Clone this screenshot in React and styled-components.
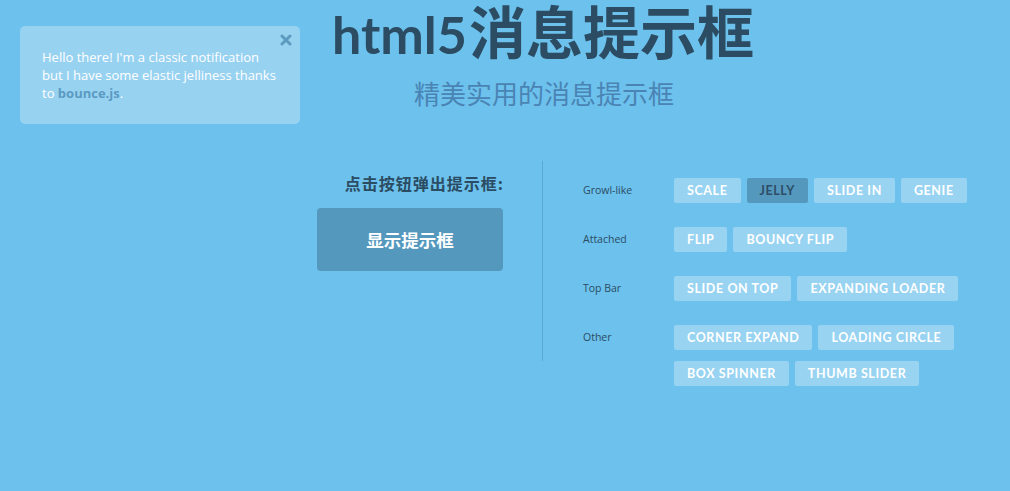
import styled, { createGlobalStyle } from "styled-components";

const groups = [
  { label: "Growl-like", items: ["Scale", "Jelly", "Slide in", "Genie"], active: "Jelly" },
  { label: "Attached", items: ["Flip", "Bouncy Flip"] },
  { label: "Top Bar", items: ["Slide on top", "Expanding loader"] },
  { label: "Other", items: ["Corner expand", "Loading circle", "Box spinner", "Thumb slider"] },
];

const App = () => {
  return (
    <>
      <GlobalStyle />
      <Page>
        <Notice>
          <CloseBtn aria-label="close">
            <svg width="12" height="12" viewBox="0 0 12 12">
              <path d="M2 2 L10 10 M10 2 L2 10" stroke="#5d9ac0" strokeWidth="3" strokeLinecap="round" />
            </svg>
          </CloseBtn>
          <p>
            Hello there! I'm a classic notification but I have some elastic jelliness thanks to{" "}
            <a href="#">bounce.js</a>.
          </p>
        </Notice>

        <Header>
          <h1>
            <Latin>html5</Latin>消息提示框
          </h1>
          <span>精美实用的消息提示框</span>
        </Header>

        <Main>
          <LeftCol>
            <Prompt>点击按钮弹出提示框:</Prompt>
            <ShowButton>显示提示框</ShowButton>
          </LeftCol>

          <RightCol>
            {groups.map((g) => (
              <Row key={g.label}>
                <RowLabel>{g.label}</RowLabel>
                <ButtonSet>
                  {g.items.map((item) => (
                    <StyleButton key={item} $active={item === g.active}>
                      {item}
                    </StyleButton>
                  ))}
                </ButtonSet>
              </Row>
            ))}
          </RightCol>
        </Main>
      </Page>
    </>
  );
};

export default App;

const GlobalStyle = createGlobalStyle`
  html, body {
    margin: 0;
    padding: 0;
    background: #6cc1ed;
  }

  body {
    font-family: "Open Sans", "Noto Sans CJK SC", sans-serif;
    color: #2b4c62;
  }
`;

const Page = styled.div`
  position: relative;
  width: 1010px;
  height: 491px;
  overflow: hidden;
  background: #6cc1ed;
`;

const Notice = styled.div`
  position: absolute;
  left: 20px;
  top: 26px;
  width: 280px;
  height: 98px;
  box-sizing: border-box;
  padding: 22px 20px 0 22px;
  background: #98d2f1;
  border-radius: 5px;

  p {
    margin: 0;
    font-family: "Open Sans", sans-serif;
    font-size: 13px;
    line-height: 18px;
    color: #ffffff;
  }

  a {
    color: #5a9ac2;
    font-weight: 700;
    text-decoration: none;
  }
`;

const CloseBtn = styled.span`
  position: absolute;
  top: 8px;
  right: 8px;
  display: flex;
  align-items: center;
  justify-content: center;
  width: 12px;
  height: 12px;
`;

const Header = styled.header`
  display: flex;
  flex-direction: column;
  align-items: center;
  padding-top: 0;

  h1 {
    margin: 0;
    font-family: "Noto Sans CJK SC", sans-serif;
    font-size: 57px;
    font-weight: 700;
    line-height: 58px;
    color: #2b4c62;
    padding-left: 76px;
  }

  span {
    margin-top: 13px;
    font-family: "Noto Sans CJK SC", sans-serif;
    font-size: 26px;
    line-height: 34px;
    color: #4a84b4;
    padding-left: 78px;
  }
`;

const Latin = styled.b`
  font-family: "Lato", sans-serif;
  font-size: 52px;
  font-weight: 700;
  margin-right: 2px;
`;

const Main = styled.section`
  display: grid;
  grid-template-columns: 543px 1fr;
  align-items: start;
  margin-top: 51px;
`;

const LeftCol = styled.div`
  display: flex;
  flex-direction: column;
  align-items: flex-end;
  height: 200px;
  box-sizing: border-box;
  padding: 12px 38px 0 0;
  border-right: 1px solid #5aa8d4;
`;

const Prompt = styled.div`
  font-family: "Noto Sans CJK SC", serif;
  font-size: 16px;
  font-weight: 700;
  letter-spacing: 1px;
  line-height: 20px;
  color: #2b4c62;
`;

const ShowButton = styled.button`
  margin-top: 15px;
  margin-right: 1px;
  width: 186px;
  height: 63px;
  border: none;
  border-radius: 4px;
  background: #5598be;
  color: #ffffff;
  font-family: "Noto Sans CJK SC", sans-serif;
  font-size: 17.5px;
  font-weight: 700;
  cursor: pointer;
`;

const RightCol = styled.div`
  display: flex;
  flex-direction: column;
  gap: 24px;
  padding: 17px 0 0 40px;
`;

const Row = styled.div`
  display: flex;
  align-items: flex-start;
`;

const RowLabel = styled.div`
  width: 91px;
  flex: 0 0 91px;
  font-family: "Open Sans", sans-serif;
  font-size: 10.5px;
  line-height: 25px;
  color: #2b4c62;
`;

const ButtonSet = styled.div`
  display: flex;
  flex-wrap: wrap;
  gap: 11px 6px;
  max-width: 300px;
`;

const StyleButton = styled.button`
  height: 25px;
  padding: 0 13px;
  border: none;
  border-radius: 2px;
  background: ${(p) => (p.$active ? "#5598be" : "#98d3f1")};
  color: ${(p) => (p.$active ? "#2d4e66" : "#ffffff")};
  font-family: "Lato", sans-serif;
  font-size: 12.5px;
  font-weight: 700;
  letter-spacing: 0.6px;
  text-transform: uppercase;
  cursor: pointer;
`;
